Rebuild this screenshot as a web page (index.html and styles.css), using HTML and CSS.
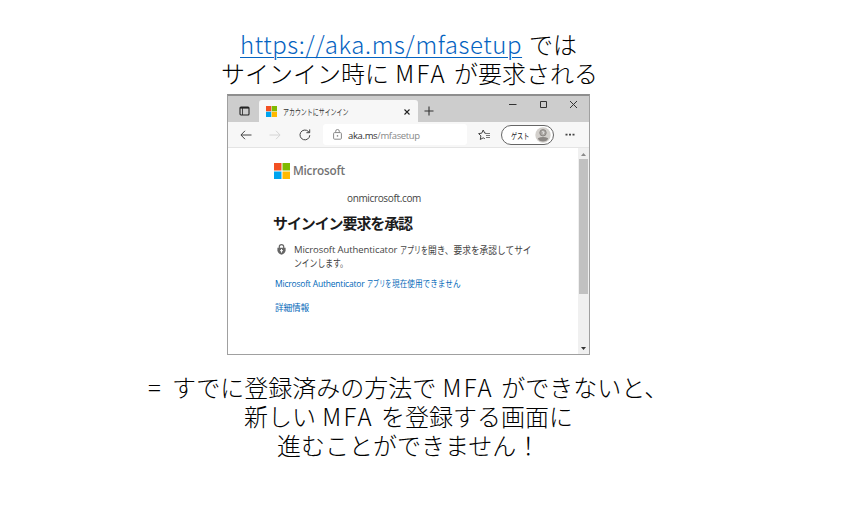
FILE: index.html
```html
<!DOCTYPE html>
<html lang="ja">
<head>
<meta charset="utf-8">
<title>MFA</title>
<link rel="stylesheet" href="styles.css">
</head>
<body>
<main class="slide">
  <div class="caption top">
    <div class="line l1"><a href="#">https://aka.ms/mfasetup</a><span class="jp">では</span></div>
    <div class="line l2">サインイン時に <span class="lat">MFA</span> が要求される</div>
  </div>

  <section class="window">
    <header class="titlebar">
      <svg class="tabmenu" width="11" height="10" viewBox="0 0 11 10"><rect x="1" y="1" width="9" height="8" rx="1" fill="none" stroke="#222" stroke-width="1.1"/><path d="M1 1.800h9" stroke="#222" stroke-width="1.600"/><path d="M3.500 2v7" stroke="#222" stroke-width=".8"/></svg>
      <div class="tab">
        <svg width="11" height="11" viewBox="0 0 23 23"><path fill="#f25022" d="M0 0h11v11H0z"/><path fill="#7fba00" d="M12 0h11v11H12z"/><path fill="#00a4ef" d="M0 12h11v11H0z"/><path fill="#ffb900" d="M12 12h11v11H12z"/></svg>
        <span class="tabtitle"><span class="t-tab">アカウントにサインイン</span></span>
        <svg class="tabclose" width="6" height="6" viewBox="0 0 6 6"><path d="M.5.5l5 5M5.500.5l-5 5" stroke="#222" stroke-width="1.1"/></svg>
      </div>
      <svg class="plus" width="10" height="10" viewBox="0 0 10 10"><path d="M5 .5v9M.5 5h9" stroke="#333" stroke-width="1.1"/></svg>
      <div class="controls">
        <svg width="8" height="8" viewBox="0 0 8 8"><path d="M0 4.500h7.500" stroke="#333"/></svg>
        <svg width="8" height="8" viewBox="0 0 8 8"><path d="M1.500 1.500h6v6h-6z" fill="none" stroke="#333"/></svg>
        <svg width="8" height="8" viewBox="0 0 8 8"><path d="M1 1l7 7M8 1l-7 7" stroke="#333"/></svg>
      </div>
    </header>
    <div class="toolbar">
      <svg class="back" width="12" height="10" viewBox="0 0 12 10"><path d="M5 .8L.9 5 5 9.200M1 5h10.500" fill="none" stroke="#444"/></svg>
      <svg class="fwd" width="12" height="10" viewBox="0 0 12 10"><path d="M7 .8L11.100 5 7 9.200M11 5H.5" fill="none" stroke="#d4d4d4"/></svg>
      <svg class="reload" width="12" height="12" viewBox="0 0 12 12"><path d="M10.800 6.200A4.900 4.900 0 1 1 9.300 2.400L10.500 3.500M10.700.4v3.300H7.400" fill="none" stroke="#444"/></svg>
      <div class="address">
        <svg width="9" height="11" viewBox="0 0 9 11"><rect x=".6" y="3.600" width="7.800" height="6.600" rx="1" fill="none" stroke="#888"/><path d="M2.700 3.500V2.300a1.800 1.800 0 0 1 3.600 0v1.200" fill="none" stroke="#888"/><circle cx="4.500" cy="6.900" r=".8" fill="#888"/></svg>
        <span class="url"><b>aka.ms</b>/mfasetup</span>
      </div>
      <svg class="fav" width="13" height="12" viewBox="0 0 13 12"><path d="M8 4.300L6.700 4.100 5.200 1 3.700 4.200.6 4.600 2.900 6.900 2.300 10.500 5.200 8.800 6.800 9.700" fill="none" stroke="#444"/><path d="M8 4.500h4M8 6.500h4M8 8.500h4" stroke="#777"/></svg>
      <div class="profile"><span class="t-guest">ゲスト</span>
        <svg width="16" height="16" viewBox="0 0 16 16"><circle cx="8" cy="8" r="7.700" fill="#d3d0cc"/><circle cx="8" cy="5.800" r="3.200" fill="#aaa6a2" stroke="#8b8784"/><path d="M2.800 11.200Q8 9 13.200 11.200Q12 14.500 8 14.500Q4 14.500 2.800 11.200Z" fill="#8b8784"/><path d="M7 5q1-1 1.800 0T8 6.500v.8" stroke="#eee" stroke-width=".9" fill="none"/></svg>
      </div>
      <svg class="more" width="10" height="3" viewBox="0 0 10 3"><path d="M.5.700h2v1.800h-2zM4 .7h2v1.800H4zM7.500.7h2v1.800h-2z" fill="#444"/></svg>
    </div>
    <div class="viewport">
      <div class="page">
        <div class="brand">
          <svg width="16" height="16" viewBox="0 0 32 32"><path fill="#f25022" d="M0 0h15v15H0z"/><path fill="#7fba00" d="M17 0h15v15H17z"/><path fill="#00a4ef" d="M0 17h15v15H0z"/><path fill="#ffb900" d="M17 17h15v15H17z"/></svg>
          <span class="t-ms">Microsoft</span>
        </div>
        <div class="account">onmicrosoft.com</div>
        <h1>サインイン要求を承認</h1>
        <div class="request">
          <svg width="9" height="11" viewBox="0 0 9 11"><path d="M2.300 4V2.800a2.200 2.200 0 0 1 4.400 0V4" fill="none" stroke="#666" stroke-width="1.200"/><path d="M.4 3.700h8.200v2.800Q8.300 9.300 4.500 10.800.7 9.300.4 6.500z" fill="#666"/><path d="M4.500 5v3.600M3 6.700h3" stroke="#fff"/></svg>
          <div class="message">
            <div class="row"><span class="en">Microsoft Authenticator</span><span class="k1">アプリを</span><span class="j1">開き、要求を承認してサイ</span></div>
            <div class="row"><span class="k2">ンインします。</span></div>
          </div>
        </div>
        <a class="alt" href="#"><span class="en2">Microsoft Authenticator</span><span class="k3">アプリを</span><span class="j3">現在使用できません</span></a>
        <a class="info" href="#">詳細情報</a>
      </div>
      <div class="scroll">
        <svg width="5" height="3" viewBox="0 0 5 3"><path d="M0 3L2.500 0 5 3z" fill="#8a8a8a"/></svg>
        <div class="thumb"></div>
        <svg width="5" height="3" viewBox="0 0 5 3"><path d="M0 0h5L2.500 3z" fill="#333"/></svg>
      </div>
    </div>
  </section>

  <div class="caption bottom">
    <div class="line l3"><span class="eq">=</span>すでに登録済みの方法で <span class="lat">MFA</span> ができないと、</div>
    <div class="line l4">新しい <span class="lat">MFA</span> を登録する画面に</div>
    <div class="line l5">進むことができません！</div>
  </div>
</main>
</body>
</html>
```
FILE: styles.css
```css
* { box-sizing: border-box; }
body { margin: 0; background: #fff; font-family: "Noto Sans CJK JP", sans-serif; }
svg { display: block; flex: none; }
.slide { width: 845px; height: 505px; padding-top: 29px; overflow: hidden; }
.caption { color: #000; font-size: 24px; font-weight: 300; line-height: 29px; white-space: nowrap; }
.line { height: 29px; }
.top { height: 65px; }
.l1 { padding-left: 240px; display: flex; }
.l1 a { width: 282px; color: #0563c1; letter-spacing: .58px; text-decoration-thickness: 1px; text-underline-offset: 3px; }
.jp { margin-left: 7px; }
.lat { letter-spacing: 2.200px; margin: 0 2px 0 1px; }
.eq { display: inline-block; width: 24px; }
.l2 { padding-left: 221px; }
.l3 { padding-left: 148px; }
.l4 { padding-left: 244px; }
.l5 { padding-left: 277px; }
.bottom { padding-top: 17px; }
.window { width: 363px; height: 261px; margin-left: 227px; border: 1px solid #a0a0a0; border-top: 2px solid #8e8e8e; display: flex; flex-direction: column; }
.titlebar { height: 26px; flex: none; background: #cdcdcd; display: flex; }
.tabmenu { margin: 10px 9px 0 11px; }
.tab { width: 159px; height: 22px; margin-top: 4px; padding-left: 7px; display: flex; align-items: center; background: #f7f7f7; border-radius: 3px 3px 0 0; }
.tabtitle { width: 132px; padding-left: 6px; font-size: 8.500px; line-height: 12px; color: #333; white-space: nowrap; }
.t-tab, .t-guest, .k1, .k2, .k3, .j1, .j3 { display: inline-block; transform-origin: 0 50%; white-space: nowrap; }
.t-tab { width: 93.500px; transform: scaleX(.7); }
.tabclose { margin-left: -5px; margin-top: 1px; }
.plus { margin: 10px 0 0 6px; }
.controls { margin-left: 75px; padding-top: 4px; display: flex; gap: 22px; }
.toolbar { height: 26px; flex: none; background: #f7f7f7; border-bottom: 1px solid #e4e4e4; display: flex; align-items: center; }
.back { margin-left: 12px; }
.fwd { margin-left: 17px; }
.reload { margin-left: 18px; }
.address { width: 144px; height: 21px; margin-left: 12px; padding-left: 10px; border-radius: 3px; background: #fff; display: flex; align-items: center; }
.url { margin: 3px 0 0 6px; color: #888; font: 9.500px/14px "Open Sans", sans-serif; letter-spacing: -.35px; white-space: nowrap; }
.url b { color: #333; font-weight: 500; }
.fav { margin-left: 11px; }
.profile { width: 53px; height: 20px; margin-left: 10px; padding-left: 9px; border: 1px solid #666; border-radius: 11px; display: flex; align-items: center; justify-content: space-between; padding-right: 2px; background: #fff; }
.t-guest { width: 22px; font-size: 8.500px; line-height: 12px; transform: scaleX(.72); color: #222; }
.more { margin-left: 11px; }
.viewport { flex: 1; min-height: 0; display: flex; background: #fff; }
.page { width: 350px; padding: 15px 0 0 46px; white-space: nowrap; }
.brand { height: 16px; display: flex; align-items: center; }
.t-ms { margin-left: 3px; font: 600 12px/16px "Open Sans", sans-serif; letter-spacing: -.25px; color: #737373; transform: scaleX(.98); transform-origin: 0 50%; }
.account { margin: 12px 0 0 73px; height: 14px; font: 10px/14px "Open Sans", sans-serif; letter-spacing: -.35px; color: #444; }
h1 { margin: 8px 0 0 -1px; height: 20px; font-size: 15px; line-height: 20px; font-weight: 700; color: #1b1b1b; letter-spacing: -1.100px; }
.request { margin-top: 9px; padding-left: 3px; height: 27px; display: flex; }
.request svg { margin-top: 2px; }
.message { margin: 1px 0 0 8px; font-size: 10px; color: #444; }
.row { display: flex; height: 13px; line-height: 13px; white-space: nowrap; }
.en { width: 106px; font-family: "Open Sans", sans-serif; font-size: 9.500px; letter-spacing: -.08px; }
.k1 { width: 28px; transform: scaleX(.7); }
.j1 { transform: scaleX(.87); }
.k2 { transform: scaleX(.78); }
.alt, .info { display: flex; margin-left: 1px; height: 14px; font-size: 8.700px; line-height: 14px; color: #0067b8; text-decoration: none; }
.alt { margin-top: 8px; }
.info { margin-top: 10px; letter-spacing: -.2px; }
.en2 { width: 92px; font-family: "Open Sans", sans-serif; font-size: 8.500px; letter-spacing: -.2px; }
.k3 { width: 25px; transform: scaleX(.7); }
.j3 { transform: scaleX(.88); }
.scroll { width: 11px; background: #f0f0f0; padding: 5px 1px 4px; display: flex; flex-direction: column; align-items: center; }
.thumb { width: 9px; height: 135px; margin: 3px 0 auto; background: #c1c1c1; }
```
